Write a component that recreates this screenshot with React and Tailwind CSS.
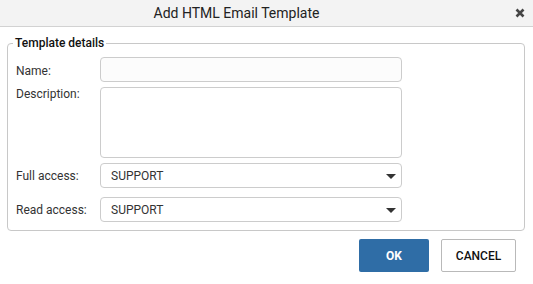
import React from "react";

function Caret() {
  return (
    <svg width="10" height="5" viewBox="0 0 10 5" className="absolute right-[5px] top-[10px]">
      <polygon points="0,0 10,0 5,5" fill="#333" />
    </svg>
  );
}

function SelectBox({ value }) {
  return (
    <div className="relative w-[302px] h-[25px] border border-[#cccccc] rounded-[4px] bg-white flex items-center pl-[10px] text-[12px] text-[#333]">
      {value}
      <Caret />
    </div>
  );
}

export default function App() {
  return (
    <div className="w-[533px] h-[284px] bg-white font-['Roboto',sans-serif] text-[#222] flex flex-col">
      <div className="relative h-[27px] shrink-0 bg-[#f3f3f3] border-b border-[#d2d2d2] flex items-center justify-center pr-[60px]">
        <span className="text-[14px] text-[#222] leading-none">Add HTML Email Template</span>
        <svg width="10" height="10" viewBox="0 0 10 10" className="absolute right-[8px] top-[8px]">
          <path d="M1.5 1.5 L8.5 8.5 M8.5 1.5 L1.5 8.5" stroke="#454545" strokeWidth="2.6" strokeLinecap="butt" />
        </svg>
      </div>

      <fieldset className="mx-[7px] mt-[8px] w-[518px] border border-[#c8c8c8] rounded-[4px] pl-[8px] pr-[8px] pb-[8px]">
        <legend className="ml-[-3px] px-[2px] text-[12px] font-medium text-[#111] leading-[16px]">Template details</legend>
        <div className="flex flex-col pt-[6px]">
          <div className="flex items-center">
            <label className="w-[84px] text-[12px] text-[#333] pt-[2px]">Name:</label>
            <div className="w-[302px] h-[25px] border border-[#cccccc] rounded-[4px] bg-[#fcfcfc]" />
          </div>
          <div className="flex items-start mt-[5px]">
            <label className="w-[84px] text-[12px] leading-[14px] text-[#333]">Description:</label>
            <div className="w-[302px] h-[71px] border border-[#cccccc] rounded-[4px] bg-white" />
          </div>
          <div className="flex items-center mt-[5px]">
            <label className="w-[84px] text-[12px] text-[#333]">Full access:</label>
            <SelectBox value="SUPPORT" />
          </div>
          <div className="flex items-center mt-[9px]">
            <label className="w-[84px] text-[12px] text-[#333]">Read access:</label>
            <SelectBox value="SUPPORT" />
          </div>
        </div>
      </fieldset>

      <div className="flex justify-end gap-[12px] mt-[8px] pr-[17px]">
        <button className="w-[70px] h-[33px] bg-[#2f6da6] rounded-[2px] text-white text-[12px] font-bold">OK</button>
        <button className="w-[75px] h-[33px] bg-white border border-[#b9b9b9] rounded-[2px] text-[#111] text-[12px] font-medium">CANCEL</button>
      </div>
    </div>
  );
}
